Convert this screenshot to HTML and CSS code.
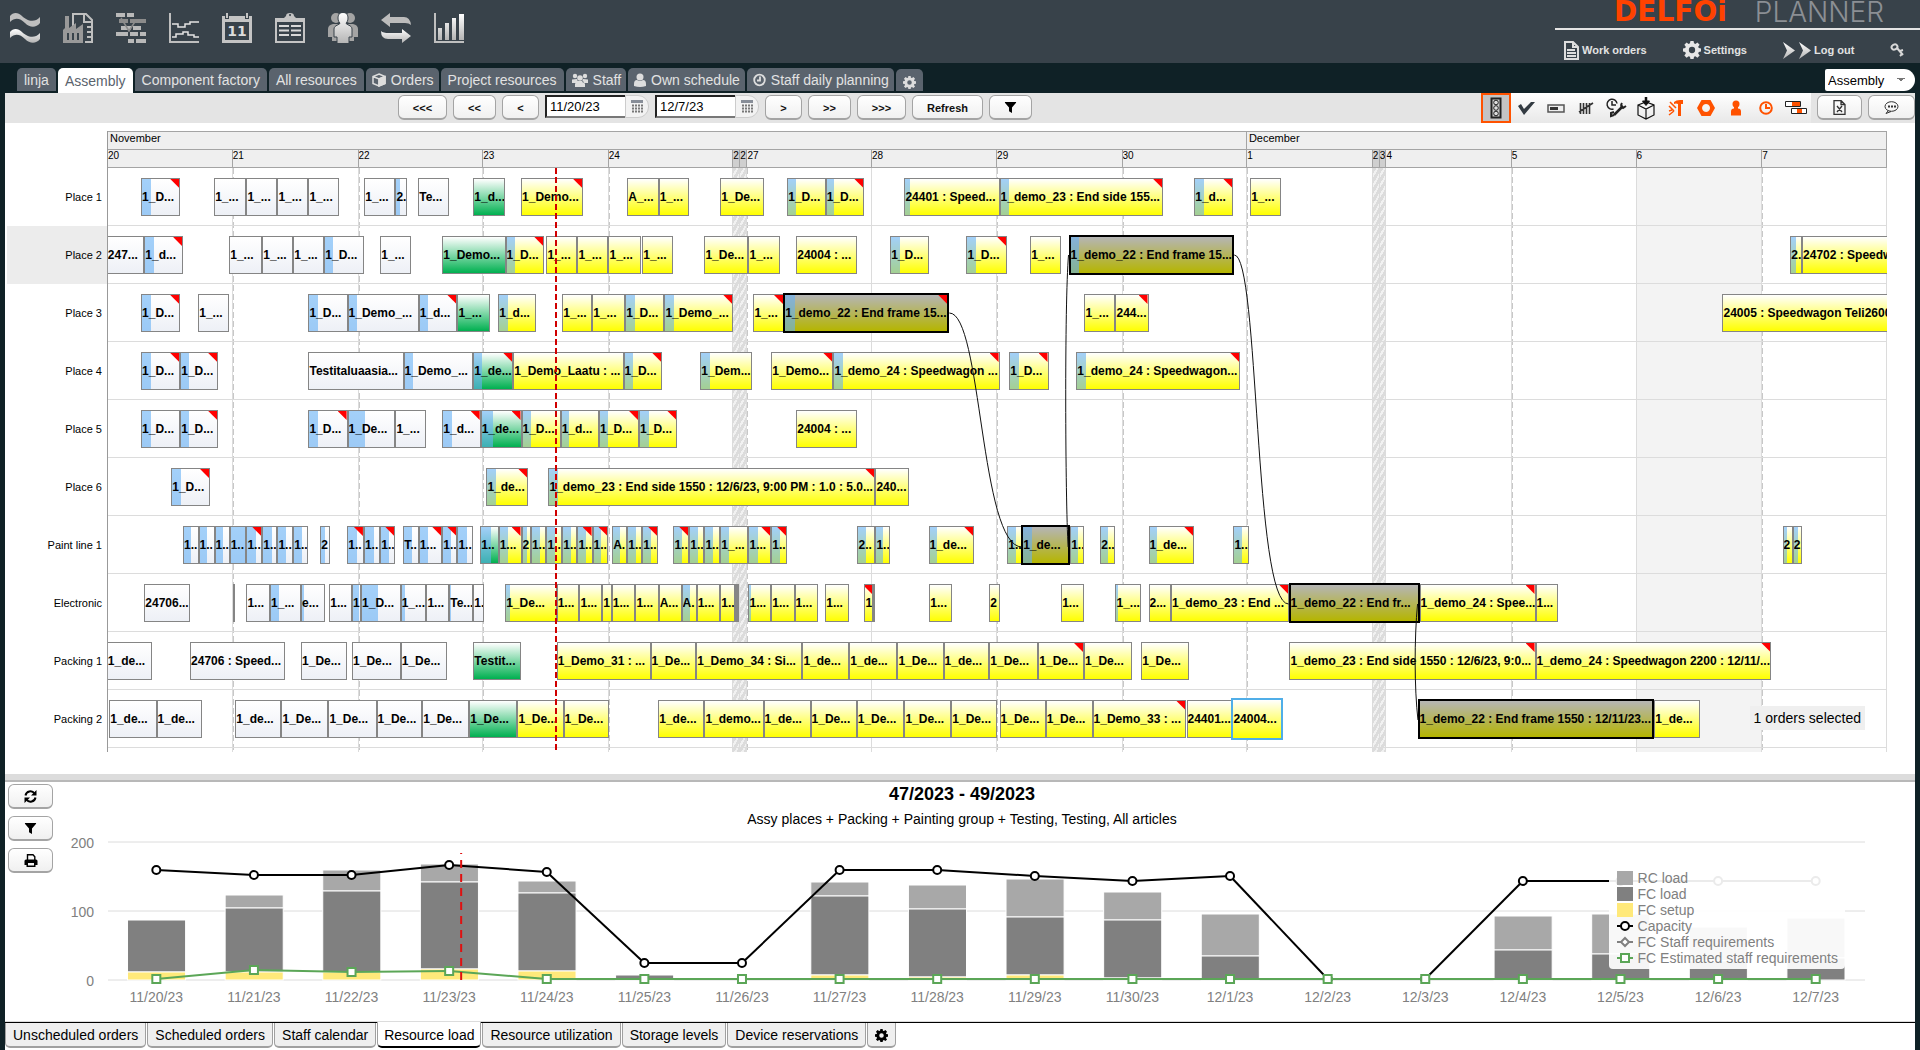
FILE: index.html
```html
<!DOCTYPE html>
<html lang="en">
<head>
<meta charset="utf-8">
<title>Delfoi Planner</title>
<link rel="stylesheet" href="styles.css">
</head>
<body>
<svg class="defs" width="0" height="0" aria-hidden="true">
  <defs>
    <linearGradient id="shine" x1="0" y1="0" x2="0" y2="1"><stop offset="0" stop-color="#fff"/><stop offset="1" stop-color="#b4b4b4"/></linearGradient>
    <symbol id="gear" viewBox="0 0 16 16"><path fill-rule="evenodd" d="M6.600 0h2.800l.4 2.100 1.200.5L12.800 1.300l2 2-1.300 1.800.5 1.200 2 .3v2.800l-2 .4-.5 1.200 1.300 1.800-2 2L11 13.500l-1.200.5-.4 2H6.600l-.4-2-1.200-.5-1.800 1.300-2-2L2.500 11 2 9.800 0 9.400V6.600l2-.3.5-1.200L1.200 3.300l2-2L5 2.600l1.200-.5zM8 5.200A2.800 2.800 0 1 0 8 10.800 2.800 2.800 0 1 0 8 5.200z"/></symbol>
    <symbol id="funnel" viewBox="0 0 14 14"><path d="M1 1h12v1L8.600 7v6L5.400 11V7L1 2z"/></symbol>
    <symbol id="calendar-grid" viewBox="0 0 12 14"><path d="M0 0h12v3H0z" fill="#888e98"/><path d="M1 5.500h11M1 8.500h11M1 11.500h11" stroke="#777" stroke-width="2" stroke-dasharray="2 1"/></symbol>
  </defs>
</svg>

<header class="topbar">
  <nav class="modules" aria-label="Modules">
    <a href="#" aria-label="Flow"><svg viewBox="0 0 30 30"><path fill="#bfbfbf" d="M0 3C3-1 8-1 12 3s12 8 18 1v6c-4 5-10 5-15 0S5 4 0 9z"/><path fill="url(#shine)" d="M0 19c3-4 8-4 12 0s12 8 18 1v6c-4 5-10 5-15 0S5 20 0 25z"/></svg></a>
    <a href="#" aria-label="Factory"><svg viewBox="0 0 30 30"><path d="M10 13V1h13l6 6v22h-7" fill="none" stroke="#bfbfbf" stroke-width="2"/><path d="M21 1v8h8M24 14h5M24 19h5M24 24h5" fill="none" stroke="#bfbfbf" stroke-width="2"/><path fill="#999" fill-rule="evenodd" d="M0 30V17l2-2V3h4v12l7-5v6l7-5v19zM4 20v7h2v-7zm5 0v7h2v-7zm5 0v7h2v-7z"/></svg></a>
    <a href="#" aria-label="Scheduling"><svg viewBox="0 0 30 30"><g fill="#b9b9b9"><path d="M0 0h9v4H0zM11 0h7v4h-7zM5 13h10v4H5zM17 13h8v4h-8zM0 19h12v4H0zM14 19h8v4h-8zM12 26h6v4h-6zM20 26h10v4H20zM24 19h6v4h-6z"/><path fill="#8b8b8b" d="M3 6h9v4H3zM14 6h16v4H14z"/></g><path d="M5 5l8 13L20 7" fill="none" stroke="#8b8b8b" stroke-width="1.500"/></svg></a>
    <a href="#" aria-label="Load curves"><svg viewBox="0 0 30 30" fill="none"><path d="M1 0v29h29" stroke="#bfbfbf" stroke-width="2"/><path d="M3 11h6v3h7v-3h5V9h9M3 24h4v-3h7v-2h5v3h6v2h5" stroke="#e4e4e4" stroke-width="1.500"/></svg></a>
    <a href="#" aria-label="Calendar"><svg viewBox="0 0 30 30"><path fill="#c4c4c4" fill-rule="evenodd" d="M0 3h3v3h4V3h16v3h4V3h3v27H0zM3 9v18h24V9z"/><path fill="#c4c4c4" d="M4 0h2v5H4zM24 0h2v5h-2z"/><text x="15" y="23" text-anchor="middle" class="cal-text">11</text></svg></a>
    <a href="#" aria-label="Work list"><svg viewBox="0 0 30 30"><path fill="#c4c4c4" fill-rule="evenodd" d="M0 5h9l2-2a4 3 0 0 1 8 0l2 2h9v25H0zM2 9v19h26V9zM15 1a1 1 0 1 0 .1 0z"/><path stroke="#d8d8d8" stroke-width="2" d="M4 13h10M16 13h10M4 17.500h10M16 17.500h10M4 22h10M16 22h10"/></svg></a>
    <a href="#" aria-label="Staff"><svg viewBox="0 0 30 30"><g fill="#a4a4a4"><circle cx="8" cy="5" r="5"/><circle cx="22" cy="5" r="5"/><path d="M0 24V16q0-4 5-5h20q5 1 5 5v8h-4v4H4v-4z"/></g><path fill="url(#shine)" stroke="#38424a" d="M15-.5c4 0 5 3 5 5.500 0 3-1 4-2 5 0 2 6 2 6 6v8h-3v6.500H9V24H6v-8c0-4 6-4 6-6-1-1-2-2-2-5 0-2.500 1-5.500 5-5.500z"/></svg></a>
    <a href="#" aria-label="Transfers"><svg viewBox="0 0 30 30"><path fill="#bcbcbc" d="M0 7l9-7v4h14q6 0 7 8-2-2-6-2H9v4z"/><path fill="url(#shine)" d="M30 23l-9-7v4H8Q2 20 0 18q0 8 7 8h14v4z"/></svg></a>
    <a href="#" aria-label="Reports"><svg viewBox="0 0 30 30"><path d="M1 0v29h29" fill="none" stroke="#bfbfbf" stroke-width="2"/><path fill="url(#shine)" d="M4 15h4v12H4zM11 10h4v17h-4zM18 5h4v22h-4zM25 1h5v26h-5z"/></svg></a>
  </nav>
  <div class="account">
    <div class="brand"><span class="brand-name">DELFOi</span><span class="brand-product">PLANNER</span></div>
    <nav class="account-menu" aria-label="Account">
      <a href="#"><svg width="15" height="19" viewBox="0 0 15 19" fill="none" stroke="#ddd" stroke-width="2"><path d="M1 1h8l5 5v12H1zM9 1v5h5M3 9h8M3 12h9M3 15h9"/></svg>Work orders</a>
      <a href="#"><svg width="18" height="18" fill="#e6e6e6"><use href="#gear"/></svg>Settings</a>
      <a href="#"><svg width="28" height="17" viewBox="0 0 28 17" fill="url(#shine)"><path d="M0 0l12 8.500L0 17l4-8.500zM16 0l12 8.500L16 17l4-8.500z"/></svg>Log out</a>
      <a href="#" aria-label="Change password"><svg width="14" height="14" viewBox="0 0 14 14" fill="none" stroke="#d8d8d8"><ellipse cx="4.500" cy="4" rx="3" ry="2.500" stroke-width="2" transform="rotate(-30 4.500 4)"/><path d="M7 5l6 7M10 8l3-1M12 11l-2 2" stroke-width="2"/></svg></a>
    </nav>
  </div>
</header>

<div class="tabbar">
  <nav class="tabs" aria-label="Views">
    <a href="#">linja</a>
    <a href="#" class="current">Assembly</a>
    <a href="#">Component factory</a>
    <a href="#">All resources</a>
    <a href="#" class="with-icon"><svg width="14" height="14" viewBox="0 0 14 14" fill="none" stroke="#ddd" stroke-width="1.500"><path d="M7 1l6 2.500v7L7 13l-6-2.500v-7zM1 3.500L7 6l6-2.500M7 6v7"/><path fill="#ddd" d="M7 6l6-2.500v7L7 13z"/></svg>Orders</a>
    <a href="#">Project resources</a>
    <a href="#" class="with-icon"><svg width="16" height="14" viewBox="0 0 16 14" fill="#ddd"><circle cx="3" cy="3" r="2.200"/><circle cx="13" cy="3" r="2.200"/><circle cx="8" cy="5" r="2.800"/><path d="M0 10V6.500L5 6l1 3-3 1zM16 10V6.500L11 6l-1 3 3 1zM3 14v-3q1-3 3-3h4q2 0 3 3v3z"/></svg>Staff</a>
    <a href="#" class="with-icon"><svg width="12" height="14" viewBox="0 0 12 14" fill="#ddd"><circle cx="6" cy="4" r="3.500"/><path d="M0 13v-2q0-4 3-4 3 2 6 0 3 0 3 4v2q-6 2-12 0z"/></svg>Own schedule</a>
    <a href="#" class="with-icon"><svg width="13" height="14" viewBox="0 0 13 14" fill="none" stroke="#ddd" stroke-width="1.800"><circle cx="6.500" cy="7" r="5.300"/><path d="M7 3.500V7.500H4"/></svg>Staff daily planning</a>
    <a href="#" class="configure" aria-label="Configure views"><svg width="13" height="13" fill="#ddd"><use href="#gear"/></svg></a>
  </nav>
  <select class="view-select" aria-label="View"><option>Assembly</option></select>
</div>

<main class="workspace">
  <div class="toolbar">
    <button class="btn w49" type="button">&lt;&lt;&lt;</button>
    <button class="btn w43" type="button">&lt;&lt;</button>
    <button class="btn w37" type="button">&lt;</button>
    <div class="date"><input type="text" value="11/20/23" aria-label="Start date"><button type="button" aria-label="Pick start date"><svg width="12" height="14"><use href="#calendar-grid"/></svg></button></div>
    <div class="date"><input type="text" value="12/7/23" aria-label="End date"><button type="button" aria-label="Pick end date"><svg width="12" height="14"><use href="#calendar-grid"/></svg></button></div>
    <button class="btn w37" type="button">&gt;</button>
    <button class="btn w43" type="button">&gt;&gt;</button>
    <button class="btn w49" type="button">&gt;&gt;&gt;</button>
    <button class="btn w71" type="button">Refresh</button>
    <button class="btn w43" type="button" aria-label="Filter"><svg width="13" height="13"><use href="#funnel"/></svg></button>
    <div class="modes">
      <button type="button" class="on" aria-label="Status lights"><svg width="22" height="22" viewBox="0 0 22 22"><path d="M6.500 1.500h9v19h-9z" fill="#ccc" stroke="#222" stroke-width="2"/><g fill="#ddd" stroke="#222"><circle cx="11" cy="5.500" r="2.300"/><circle cx="11" cy="11" r="2.300"/><circle cx="11" cy="16.500" r="2.300"/></g></svg></button>
      <button type="button" aria-label="Confirm"><svg width="22" height="22" viewBox="0 0 22 22"><path fill="#333b42" d="M3 9l3-2 3 5 7-7h4L9 18z"/></svg></button>
      <button type="button" aria-label="Progress"><svg width="22" height="22" viewBox="0 0 22 22"><path d="M3 8h16v7H3z" fill="#eee" stroke="#555" stroke-width="1.500"/><path fill="#333" d="M5 10h8v3H5z"/></svg></button>
      <button type="button" aria-label="Quantity"><svg width="22" height="22" viewBox="0 0 22 22" fill="none" stroke="#333" stroke-width="1.600"><path d="M5.500 6v11M8.500 6v11M11.500 6v11M14.500 6v11M4 15l14-9M17 6v2"/></svg></button>
      <button type="button" aria-label="Setup time"><svg width="22" height="22" viewBox="0 0 22 22" fill="none" stroke="#222" stroke-width="1.500"><path d="M8.500 12A5 5 0 1 1 12 6.500M7 4v4h4"/><path stroke-width="2.500" d="M9 18L18 9"/><path stroke-width="2" d="M17 6q-2 3 1 5l3-2M9 15l-3 1v3l3-1"/></svg></button>
      <button type="button" aria-label="Material"><svg width="22" height="24" viewBox="0 0 22 24" fill="none" stroke="#111"><path stroke-width="1.200" d="M3 9l8-3 8 3v10l-8 4-8-4zM3 9l8 4 8-4M11 13v10"/><path stroke-width="2.500" d="M11 1v6"/><path fill="#111" d="M7.500 5h7L11 9.500z"/></svg></button>
      <button type="button" aria-label="Tools"><svg width="22" height="22" viewBox="0 0 22 22"><path fill="#ff5200" d="M9 5q2-2 6-2h3v4h-2v12h-3V7q-2-1-4 0z"/><path fill="none" stroke="#ff5200" stroke-width="1.500" d="M5 5l6 6M4 9l5 5M4 18l5-4M4 14l3-1"/></svg></button>
      <button type="button" aria-label="Parts"><svg width="22" height="22" viewBox="0 0 22 22"><path fill="#ff5200" fill-rule="evenodd" d="M6.500 3h9L20 11l-4.500 8h-9L2 11zM11 7a4 4 0 1 0 .1 0z"/></svg></button>
      <button type="button" aria-label="Person"><svg width="22" height="22" viewBox="0 0 22 22" fill="#ff5200"><circle cx="11" cy="7" r="3.500"/><path d="M6 18.500v-4q0-3 3-3V9h4v2.500q3 0 3 3v4z"/></svg></button>
      <button type="button" aria-label="Time"><svg width="22" height="22" viewBox="0 0 22 22" fill="none" stroke="#ff5200" stroke-width="2"><circle cx="11" cy="11" r="5.800"/><path d="M11 7v4h4"/></svg></button>
      <button type="button" aria-label="Overlaps"><svg width="22" height="22" viewBox="0 0 22 22"><g fill="#fff" stroke="#222"><path d="M.5 4.500h15v5h-15zM6.500 11.500h15v5h-15z"/></g><path fill="#ff5200" d="M7 5h8v4H7zM12 12h5v4h-5z"/></svg></button>
    </div>
    <button class="btn w45" type="button" aria-label="Export to Excel"><svg width="13" height="15" viewBox="0 0 13 15" fill="none" stroke="#333"><path d="M1 .5h7l4 4v10H1zM8 .5v4h4M4 6l5 6M9 6l-5 6" stroke-width="1.300"/></svg></button>
    <button class="btn w47" type="button" aria-label="Comments"><svg width="15" height="13" viewBox="0 0 15 13" fill="none" stroke="#333"><ellipse cx="7.500" cy="5.500" rx="6.500" ry="4.800"/><path d="M4 10l-2 2.500 5-2" /><path stroke-width="2" stroke-dasharray="2 1" d="M4 5.500h8"/></svg></button>
  </div>

  <section class="gantt" aria-label="Schedule">
    <div class="row-labels" id="row-labels"></div>
    <div class="timeline">
      <div class="months"><span id="month-nov">November</span><span id="month-dec">December</span></div>
      <div class="days" id="days"></div>
      <div class="grid">
        <div class="columns" id="columns"></div>
        <div class="rows" id="rows"></div>
        <svg class="links" viewBox="264 0 4358 584" preserveAspectRatio="none" aria-hidden="true">
          <path d="M2325 145C2405 145 2400 379 2503 379"/>
          <path d="M2616 379C2609 330 2607 136 2617 87"/>
          <path d="M3023 87C3085 87 3070 436 3156 436"/>
          <path d="M3472 436C3464 470 3464 520 3473 552"/>
        </svg>
        <div class="now" id="now"></div>
        <div class="selection-note">1 orders selected</div>
      </div>
    </div>
  </section>

  <div class="splitter"></div>

  <section class="load" aria-label="Resource load">
    <div class="load-title"><h2>47/2023 - 49/2023</h2><p>Assy places + Packing + Painting group + Testing, Testing, All articles</p></div>
    <div class="load-tools">
      <button class="btn w45" type="button" aria-label="Reload"><svg width="13" height="13" viewBox="0 0 13 13" fill="none" stroke="#000" stroke-width="2"><path d="M1.500 5.500A5 5 0 0 1 10.500 3.500M11.500 7.500A5 5 0 0 1 2.500 9.500"/><path fill="#000" stroke="none" d="M12.500 0v5.500H7zM.5 13V7.500H6z"/></svg></button>
      <button class="btn w45" type="button" aria-label="Filter load"><svg width="13" height="13"><use href="#funnel"/></svg></button>
      <button class="btn w45" type="button" aria-label="Print"><svg width="14" height="13" viewBox="0 0 14 13"><path fill="none" stroke="#000" stroke-width="1.400" d="M3.500 6V.7h5.500l1.800 2V6"/><path fill-rule="evenodd" d="M.5 11V7q0-1.500 1.500-1.500h10q1.500 0 1.500 1.500v4h-2v2h-9v-2zM4 9v2.500h6V9z"/></svg></button>
    </div>
    <svg class="load-chart" id="load-chart" role="img" aria-label="Daily load and capacity"></svg>
    <ul class="legend">
      <li><i class="swatch rc"></i>RC load</li>
      <li><i class="swatch fc"></i>FC load</li>
      <li><i class="swatch setup"></i>FC setup</li>
      <li><svg width="16" height="14" fill="#fff" stroke="#000" stroke-width="2"><path d="M0 7h16"/><circle cx="8" cy="7" r="4"/></svg>Capacity</li>
      <li><svg width="16" height="14" fill="#fff" stroke="#808080" stroke-width="2"><path d="M0 7h16"/><path d="M8 3l4 4-4 4-4-4z"/></svg>FC Staff requirements</li>
      <li><svg width="16" height="14" fill="#fff" stroke="#5ba657" stroke-width="2"><path d="M0 7h16"/><path d="M4 3h8v8H4z"/></svg>FC Estimated staff requirements</li>
    </ul>
  </section>

  <nav class="panels" aria-label="Panels">
    <a href="#">Unscheduled orders</a>
    <a href="#">Scheduled orders</a>
    <a href="#">Staff calendar</a>
    <a href="#" class="current">Resource load</a>
    <a href="#">Resource utilization</a>
    <a href="#">Storage levels</a>
    <a href="#">Device reservations</a>
    <a href="#" aria-label="Configure panels"><svg width="13" height="13"><use href="#gear"/></svg></a>
  </nav>
</main>
<script src="planner.js"></script>
</body>
</html>
```

FILE: planner.js
```js
// Visible time range, in timeline ticks.
const FROM = 264, TO = 4622, SPAN = TO - FROM;
const pct = n => (n / SPAN * 100).toFixed(3) + '%';

// Day columns: [start tick, label, class]
const days = [
  [264, '20'], [570, '21'], [879, '22'], [1185, '23'], [1493, '24'],
  [1799, '2', 'off'], [1814, '2', 'off'], [1829, '27'], [2135, '28', 'plain'], [2442, '29'],
  [2750, '30'], [3056, '1'], [3364, '2', 'off'], [3379, '3', 'off'], [3393, '4', 'plain'],
  [3701, '5'], [4007, '6', 'holiday'], [4316, '7']
];

// Bars: [start, end, kind, label, setup ticks, late]
// kinds: w done, g running, y planned, d linked order, s selected
const D = '1_D...', d = '1_d...', S = '1_...', E = '1_De...', e = '1_de...', T = '1...', U = '1..';
const resources = [
  ['Place 1', [
    [345,441,'w',D,22,1],[524,603,'w',S],[603,679,'w',S],[679,755,'w',S],[755,831,'w',S],
    [892,968,'w',S],[968,997,'w','2.',12],[1024,1100,'w','Te...'],[1159,1237,'g',d],[1276,1428,'y','1_Demo...',0,1],
    [1536,1613,'y','A_...'],[1613,1688,'y',S],[1764,1872,'y',E],[1928,2022,'y',D,20],[2022,2117,'y',D,20,1],
    [2215,2448,'y','24401 : Speed...',11],[2448,2849,'y','1_demo_23 : End side 155...',22,1],[2925,3021,'y',d,22,1],[3062,3138,'y',S]]],
  ['Place 2', [
    [261,353,'w','247...'],[353,448,'w',d,22,1],[561,642,'w',S],[642,718,'w',S],[718,794,'w',S],[794,892,'w',D,20],[931,1007,'w',S],
    [1083,1238,'g','1_Demo...'],[1238,1333,'y',D,22,1],[1338,1414,'y',S],[1414,1490,'y',S],[1490,1570,'y',S],[1573,1649,'y',S],
    [1725,1833,'y',E],[1833,1909,'y',S],[1950,2100,'y','24004 : ...'],[2180,2276,'y',D,22],[2367,2467,'y',D,22,1],[2523,2599,'y',S],
    [2617,3023,'d','1_demo_22 : End frame 15...',22],[4385,4414,'y','2.',13],[4414,4640,'y','24702 : Speedw']]],
  ['Place 3', [
    [345,441,'w',D,22,1],[485,561,'w',S],[755,851,'w',D,22],[851,1025,'w','1_Demo_...',22],[1025,1120,'w',d,22,1],[1120,1200,'g',S],
    [1220,1313,'y',d,22],[1377,1450,'y',S],[1450,1531,'y',S],[1531,1627,'y',D,22],[1627,1796,'y','1_Demo_...',22,1],
    [1845,1920,'y',S,0,1],[1918,2325,'d','1_demo_22 : End frame 15...',24,1],[2656,2732,'y',S],[2732,2813,'y','244...',0,1],
    [4219,4640,'y','24005 : Speedwagon Teli2600']]],
  ['Place 4', [
    [345,441,'w',D,22,1],[441,534,'w',D,20,1],[755,988,'w','Testitaluaasia...'],[988,1159,'w','1_Demo_...',22],[1159,1257,'g',e,20,1],
    [1257,1527,'y','1_Demo_Laatu : ...'],[1527,1622,'y',D,22,1],[1715,1842,'y','1_Dem...',22],[1889,2041,'y','1_Demo...',0,1],
    [2041,2448,'y','1_demo_24 : Speedwagon ...',22,1],[2472,2568,'y',D,22,1],[2636,3038,'y','1_demo_24 : Speedwagon...',22,1]]],
  ['Place 5', [
    [345,441,'w',D,22],[441,534,'w',D,20,1],[755,851,'w',D,22,1],[851,968,'w',E,42],[968,1044,'w',S],[1083,1177,'w',d,22,1],
    [1177,1277,'g',e,28,1],[1277,1373,'y',D,22],[1373,1467,'y',d,20],[1467,1565,'y',D,20,1],[1565,1659,'y',D,22,1],[1950,2100,'y','24004 : ...']]],
  ['Place 6', [
    [419,514,'w',D,22,1],[1191,1294,'y',e,22,1],
    [1343,2144,'y','1_demo_23 : End side 1550 : 12/6/23, 9:00 PM : 1.0 : 5.0...',20,1],[2144,2227,'y','240...']]],
  ['Paint line 1', [
    [448,486,'w',U,20],[486,525,'w',U,22],[525,562,'w',U,22],[562,603,'w',U,40],[603,642,'w',U,24,1],[642,679,'w',U,24],[679,718,'w',U,22],[718,755,'w',U,22],
    [784,808,'w','2',12],[850,891,'w',U,24,1],[891,931,'w',U,24],[931,968,'w',U,22,1],[987,1025,'w','T..',22],[1025,1083,'w',T,22,1],[1083,1120,'w',U,22,1],[1120,1159,'w',U,24],
    [1176,1221,'g',U,28],[1221,1277,'y',T,22,1],[1277,1300,'y','2',13],[1300,1338,'y',U,22],[1338,1377,'y',U,22],[1377,1414,'y',U,22],[1414,1451,'y',U,22,1],[1451,1490,'y',U,22,1],
    [1499,1536,'y','A.',20],[1536,1573,'y',U,22],[1573,1612,'y',U,22,1],[1649,1688,'y',U,22,1],[1688,1725,'y',U,22],[1725,1764,'y',U,22],[1764,1833,'y',S,20],[1833,1889,'y',T,22,1],[1889,1928,'y',U,22,1],
    [2100,2144,'y','2..',22],[2144,2180,'y',U,20],[2274,2386,'y',e,20,1],[2467,2503,'y',U,22],[2501,2621,'d',e,24],[2621,2656,'y',U,20],[2695,2732,'y','2..',20],
    [2813,2925,'y',e,20,1],[3021,3058,'y',U,20],[4366,4391,'y','2',12],[4391,4415,'y','2',12]]],
  ['Electronic', [
    [353,465,'w','24706...'],[571,576,'w',''],[603,661,'w',T],[661,737,'w',S,20],[737,796,'w','e...',5],[806,862,'w',T],[862,884,'w','1',20],
    [884,981,'w',D,42],[981,1044,'w',S,9],[1044,1100,'w',T],[1100,1159,'w','Te...',2],[1159,1186,'w','1.'],
    [1237,1363,'y',E,11],[1363,1419,'y',T],[1419,1475,'y',T],[1475,1498,'y','1'],[1498,1556,'y',T],[1556,1613,'y',T],[1613,1669,'y','A...'],[1669,1706,'y','A.',20],[1706,1764,'y',T],[1764,1801,'y',U],[1801,1806,'y',''],[1806,1811,'y',''],
    [1833,1889,'y',T,3],[1889,1946,'y',T],[1946,2004,'y',T],[2021,2080,'y',T],[2117,2138,'y','1',0,1],[2138,2144,'y',''],
    [2276,2332,'y',T],[2423,2448,'y','2'],[2599,2656,'y',T],[2732,2795,'y',S,3],[2813,2868,'y','2...'],[2868,3158,'y','1_demo_23 : End ...',0,1],
    [3156,3477,'d','1_demo_22 : End fr...'],[3477,3761,'y','1_demo_24 : Spee...',0,1],[3761,3817,'y',T]]],
  ['Packing 1', [
    [261,372,'w',e],[465,698,'w','24706 : Speed...'],[737,850,'w',E],[862,981,'w',E],[981,1095,'w',E],[1159,1276,'g','Testit...'],
    [1363,1593,'y','1_Demo_31 : ...'],[1593,1705,'y',E],[1705,1965,'y','1_Demo_34 : Si...'],[1965,2080,'y',e],[2080,2198,'y',e],[2198,2311,'y',E],[2311,2423,'y',e],
    [2423,2543,'y',E],[2543,2655,'y',E,0,1],[2655,2773,'y',E],[2795,2911,'y',E],
    [3158,3761,'y','1_demo_23 : End side 1550 : 12/6/23, 9:0...',0,1],[3761,4339,'y','1_demo_24 : Speedwagon 2200 : 12/11/...',0,1]]],
  ['Packing 2', [
    [267,383,'w',e],[383,495,'w',e],[576,689,'w',e],[689,804,'w',E],[804,922,'w',E],[922,1034,'w',E],[1034,1149,'w',E],[1149,1267,'g',E],[1267,1380,'y',E],[1380,1492,'y',E],
    [1612,1725,'y',e],[1725,1870,'y','1_demo...'],[1870,1985,'y',e],[1985,2098,'y',E],[2098,2215,'y',E],[2215,2330,'y',E],[2330,2443,'y',E],[2448,2561,'y',E],[2561,2676,'y',E],
    [2676,2906,'y','1_Demo_33 : ...',0,1],[2906,3020,'y','24401...'],[3016,3142,'s','24004...'],
    [3472,4052,'d','1_demo_22 : End frame 1550 : 12/11/23...'],[4052,4163,'y',e]]]
];
const kinds = { w: 'done', g: 'running', y: 'planned', d: 'planned linked', s: 'planned selected' };
const byId = id => document.getElementById(id);

const dayCells = days.map(([start, label, cls], i) => {
  const width = (i + 1 < days.length ? days[i + 1][0] : TO) - start;
  return `<span class="${cls || ''}" style="flex-grow:${width}">${label}</span>`;
});
byId('days').innerHTML = dayCells.join('');
byId('columns').innerHTML = dayCells.map(c => c.replace(/>[^<]*</, '><')).join('');
byId('month-nov').style.flexGrow = 3056 - FROM;
byId('month-dec').style.flexGrow = TO - 3056;
byId('now').style.left = pct(1360 - FROM);

byId('row-labels').innerHTML = resources.map(([name]) =>
  `<div class="${name === 'Place 2' ? 'hover' : ''}">${name}</div>`).join('');
byId('rows').innerHTML = resources.map(([, bars]) => '<div class="row">' + bars.map(([a, b, kind, label, setup, late]) =>
  `<div class="bar ${kinds[kind]}" style="left:${pct(a - FROM)};width:${pct(b - a)}">` +
  (setup ? `<i class="prep" style="width:${(setup / (b - a) * 100).toFixed(1)}%"></i>` : '') +
  (late ? '<i class="late"></i>' : '') +
  (label ? `<span>${label}</span>` : '') + '</div>').join('') + '</div>').join('');

// Load chart: [date, FC setup, FC load top, RC load top, capacity, estimated staff]
const load = [
  ['11/20/23',12,87,87,160,1],['11/21/23',12,104,123,152,14],['11/22/23',12,129,159,152,12],['11/23/23',16,142,168,167,13],
  ['11/24/23',13,126,143,157,2],['11/25/23',0,7,7,25,1],['11/26/23',0,0,0,25,1],['11/27/23',7,122,142,159,1],
  ['11/28/23',4,103,138,159,1],['11/29/23',7,91,146,151,1],['11/30/23',3,87,128,144,1],['12/1/23',0,35,96,151,1],
  ['12/2/23',0,0,0,1,1],['12/3/23',0,0,0,1,1],['12/4/23',0,43,93,144,1],['12/5/23',0,38,95,144,1],['12/6/23',0,28,77,144,1],['12/7/23',0,32,90,144,1]
];
const y = v => Math.round(148 - v * 0.69);
const step = 100 / load.length;
const cx = i => ((i + 0.495) * step).toFixed(3) + '%';
let out = '';
for (const v of [0, 100, 200]) {
  out += `<line class="rule" x1="0" x2="100%" y1="${y(v)}" y2="${y(v)}"/><text x="-14" y="${y(v) + 6}" text-anchor="end">${v}</text>`;
}
load.forEach(([date, setup, fc, rc], i) => {
  const rect = (cls, lo, hi) => hi > lo
    ? `<rect class="${cls}" x="${((i + 0.2) * step).toFixed(3)}%" width="${(step * 0.595).toFixed(3)}%" y="${y(hi)}" height="${y(lo) - y(hi)}"/>` : '';
  out += rect('rc', fc, rc) + rect('fc', setup, fc) + rect('setup', 0, setup);
  out += `<text x="${cx(i)}" y="170" text-anchor="middle">${date}</text>`;
});
const series = (cls, col) => {
  for (let i = 1; i < load.length; i++) {
    out += `<line class="${cls}" x1="${cx(i - 1)}" y1="${y(load[i - 1][col])}" x2="${cx(i)}" y2="${y(load[i][col])}"/>`;
  }
};
series('capacity', 4);
load.forEach((r, i) => { out += `<circle class="capacity" cx="${cx(i)}" cy="${y(r[4])}" r="4"/>`; });
series('staff', 5);
out += '<line class="today" x1="20.1%" x2="20.1%" y1="148" y2="21"/>';
load.forEach((r, i) => { out += `<svg x="${cx(i)}" y="${y(r[5])}" overflow="visible"><path class="staff" d="M-4-4h8v8h-8z"/></svg>`; });
byId('load-chart').innerHTML = out;
```

FILE: styles.css
```css
* { box-sizing: border-box; }

body {
  margin: 0;
  min-height: 100vh;
  display: flex;
  flex-direction: column;
  background: #0f2126;
  color: #000;
  font: 14px "Liberation Sans", Arial, sans-serif;
}

a { color: inherit; text-decoration: none; }
svg { flex: none; }
.defs { position: absolute; }
button, input, select { font-family: inherit; }

/* Top bar */
.topbar {
  display: flex;
  justify-content: space-between;
  height: 63px;
  background: #38424a;
}
.modules { display: flex; gap: 23px; padding: 13px 0 0 10px; }
.modules svg { display: block; width: 30px; height: 30px; }
.cal-text { font: bold 14px "DejaVu Sans", sans-serif; fill: #ddd; }

.account { width: 365px; color: #e2e2e2; }
.brand {
  display: flex;
  align-items: center;
  gap: 28px;
  height: 30px;
  padding: 0 36px 4px 0;
  justify-content: flex-end;
  border-bottom: 2px solid #e4e4e4;
}
.brand-name { color: #ff4200; font: bold 28px/24px "DejaVu Sans", sans-serif; }
.brand-product { color: #8b8f94; font: 300 28px/24px Inter, sans-serif; }
.account-menu { display: flex; gap: 36px; padding: 10px 0 0 9px; }
.account-menu a { display: flex; align-items: center; gap: 3px; height: 20px; font-size: 11px; font-weight: bold; }

/* View tabs */
.tabbar { display: flex; justify-content: space-between; height: 30px; padding: 5px 5px 0 17px; }
.tabs { display: flex; gap: 2px; }
.tabs a {
  display: flex;
  align-items: center;
  height: 23px;
  padding: 0 7px;
  border-radius: 5px 5px 0 0;
  background: #5a636d;
  color: #e2e2e2;
  white-space: nowrap;
}
.tabs a.current { height: 25px; background: #fff; color: #5a636d; }
.tabs a.with-icon { gap: 5px; padding: 0 5px 0 6px; }
.tabs a.configure { height: 22px; margin-top: 1px; padding-top: 4px; }
.view-select {
  appearance: none;
  width: 90px;
  height: 22px;
  margin-top: 1px;
  padding: 0 3px;
  border: 0;
  border-radius: 2px 11px 11px 2px;
  background: linear-gradient(#777, #777) no-repeat 75px 11px / 2px 1px, linear-gradient(#777, #777) no-repeat 72px 9px / 8px 1px, linear-gradient(#777, #777) no-repeat 74px 10px / 4px 1px, #fff;
  color: #000;
  font-size: 13px;
}

/* Workspace */
.workspace { flex: 1; margin: 0 5px; background: #fff; }

.toolbar {
  display: flex;
  align-items: flex-start;
  gap: 6px;
  height: 30px;
  padding: 0 0 0 393px;
  background: #e4e4e4;
}
.toolbar > .btn, .date { margin-top: 2px; }
.btn {
  display: flex;
  flex: none;
  align-items: center;
  justify-content: center;
  height: 25px;
  padding: 1px 0 0;
  border: 1px solid #a4a4a4;
  border-bottom-width: 2px;
  border-radius: 6px;
  background: linear-gradient(#fff, #f0f0f0);
  color: #111;
  font-size: 11px;
  font-weight: bold;
}
.w37 { width: 37px; }
.w43 { width: 43px; }
.w45 { width: 45px; }
.w47 { width: 47px; }
.w49 { width: 49px; }
.w71 { width: 71px; }
.date { display: flex; height: 23px; }
.date input {
  width: 80px;
  height: 23px;
  padding: 0 3px;
  border: 2px solid #222;
  border-right: 0;
  border-bottom-color: #777;
  border-radius: 0;
  background: #fff;
  font-size: 13px;
}
.date button {
  display: flex;
  align-items: center;
  justify-content: center;
  width: 24px;
  height: 23px;
  padding: 0;
  border: 1px solid #ccc;
  border-radius: 0 11px 11px 0;
  background: #f2f2f2;
}
.modes { display: flex; margin-left: auto; background: linear-gradient(#fff, #e8e8e8); }
.modes button {
  display: flex;
  align-items: center;
  justify-content: center;
  width: 30px;
  height: 30px;
  padding: 0;
  border: 0;
  background: none;
}
.modes .on { border: 2px solid #ff5200; background: #c4c4c4; }

/* Gantt */
.gantt { display: grid; grid-template-columns: 102px 1fr; padding: 8px 28px 22px 0; }
.row-labels { padding: 37px 0 0 2px; font-size: 11px; }
.row-labels div {
  display: flex;
  align-items: center;
  justify-content: flex-end;
  height: 58px;
  padding-right: 5px;
}
.row-labels .hover { background: #ececec; }

.timeline { min-width: 0; border-left: 1px solid #999; }
.months, .days { display: flex; background: #efefef; border-top: 1px solid #a4a4a4; border-right: 1px solid #a4a4a4; }
.months { height: 18px; font-size: 11px; line-height: 13px; }
.months span { flex: 1 1 0; padding-left: 2px; }
.days { height: 19px; border-bottom: 1px solid #a4a4a4; font-size: 10px; line-height: 12px; }
.days span, .columns span { flex: 1 1 0; min-width: 0; overflow: hidden; }
.days span + span, .months span + span { border-left: 1px solid #a4a4a4; }
.days .off { background: #cfcfcf; }

.grid { position: relative; padding-bottom: 4px; }
.columns { position: absolute; inset: 0; display: flex; border-right: 1px solid #dcdcdc; }
.columns span {
  border-left: 1px solid #dcdcdc;
  background: repeating-linear-gradient(#c8c8c8 0 6px, transparent 6px 9px) no-repeat 0 0 / 1px 100%;
}
.columns span:first-child { border-left: 0; background: none; }
.columns .plain { background: none; }
.columns .holiday { background: #f3f3f3; }
.columns .off { background: repeating-linear-gradient(120deg, #dcdcdc 0 3px, #f1f1f1 3px 5px); }

.rows { position: relative; overflow: hidden; }
.row { position: relative; height: 58px; border-bottom: 1px solid #dcdcdc; }
.bar {
  position: absolute;
  top: 10px;
  height: 38px;
  border: 1px solid #858585;
  overflow: hidden;
  font-size: 12px;
  font-weight: bold;
  line-height: 37px;
  white-space: nowrap;
}
.bar span { position: relative; }
.done { background: linear-gradient(#fff, #edf0f6); }
.running { background: linear-gradient(#fff, #00b050); }
.planned { background: linear-gradient(#fff, #ff0); }
.linked {
  top: 9px;
  height: 40px;
  border: 2px solid #000;
  background: linear-gradient(#b5b5b5, #b5b500);
  z-index: 1;
}
.selected { top: 8px; height: 42px; border: 2px solid #50aee8; line-height: 39px; z-index: 1; }
.prep { position: absolute; top: 0; bottom: 0; left: 0; background: rgba(102, 176, 245, 0.6); }
.late {
  position: absolute;
  top: 0;
  right: 0;
  width: 9px;
  height: 9px;
  background: #f00;
  clip-path: polygon(0 0, 100% 0, 100% 100%);
}
.links {
  position: absolute;
  inset: 0;
  width: 100%;
  height: 100%;
  fill: none;
  stroke: #111;
  pointer-events: none;
  z-index: 2;
}
.links path { vector-effect: non-scaling-stroke; }
.now {
  position: absolute;
  top: 0;
  bottom: 0;
  width: 2px;
  background: repeating-linear-gradient(#d00000 0 6px, transparent 6px 9px);
  z-index: 2;
}
.selection-note {
  position: absolute;
  right: 22px;
  bottom: 22px;
  padding: 0 4px;
  background: #efefef;
  line-height: 24px;
}

.splitter { height: 8px; border-bottom: 2px solid #b8b8b8; background: #dcdcdc; }

/* Load chart */
.load {
  position: relative;
  display: grid;
  grid-template-columns: 103px 1fr 50px;
  grid-template-rows: 50px 189px;
  border-bottom: 1px solid #dcdcdc;
}
.load-title { grid-area: 1 / 1 / 2 / 4; padding-left: 4px; text-align: center; }
.load-title h2 { margin: 0; font-size: 18px; line-height: 24px; }
.load-title p { margin: 0; padding-top: 3px; line-height: 20px; }
.load-tools { grid-area: 1 / 1 / 3 / 2; display: flex; flex-direction: column; gap: 7px; padding: 2px 0 0 3px; }
.load-chart { grid-area: 2 / 2; width: 100%; height: 189px; overflow: visible; }
.load-chart text { fill: #808080; font-size: 14px; }
.load-chart .rule { stroke: #dcdcdc; }
.load-chart rect { stroke: #fff; }
.rc { fill: #a8a8a8; background: #a8a8a8; }
.fc { fill: #808080; background: #808080; }
.setup { fill: #ffe97a; background: #ffe97a; }
.capacity { fill: #fff; stroke: #000; stroke-width: 2; }
.staff { fill: #fff; stroke: #5ba657; stroke-width: 2; }
.today { stroke: #e01010; stroke-width: 2; stroke-dasharray: 8 6; }
.legend {
  position: absolute;
  top: 84px;
  right: 70px;
  margin: 0;
  padding: 4px 7px 3px 8px;
  border-radius: 4px;
  background: rgba(255, 255, 255, 0.92);
  color: #808080;
  list-style: none;
}
.legend li { display: flex; align-items: center; gap: 5px; height: 16px; white-space: nowrap; }
.swatch { width: 16px; height: 14px; }

/* Bottom panels */
.panels { display: flex; border-top: 1px solid #000; }
.panels a {
  display: flex;
  align-items: center;
  height: 25px;
  padding: 1px 7px 0;
  border: 1px solid #a0a0a0;
  border-top: 0;
  border-bottom-width: 2px;
  border-radius: 0 0 5px 5px;
  background: #efefef;
  white-space: nowrap;
}
.panels a + a { margin-left: 1px; }
.panels .current { margin-top: -1px; height: 26px; padding: 2px 6px 0; border-color: #a0a0a0 #a0a0a0 #000; background: #fff; }
```
